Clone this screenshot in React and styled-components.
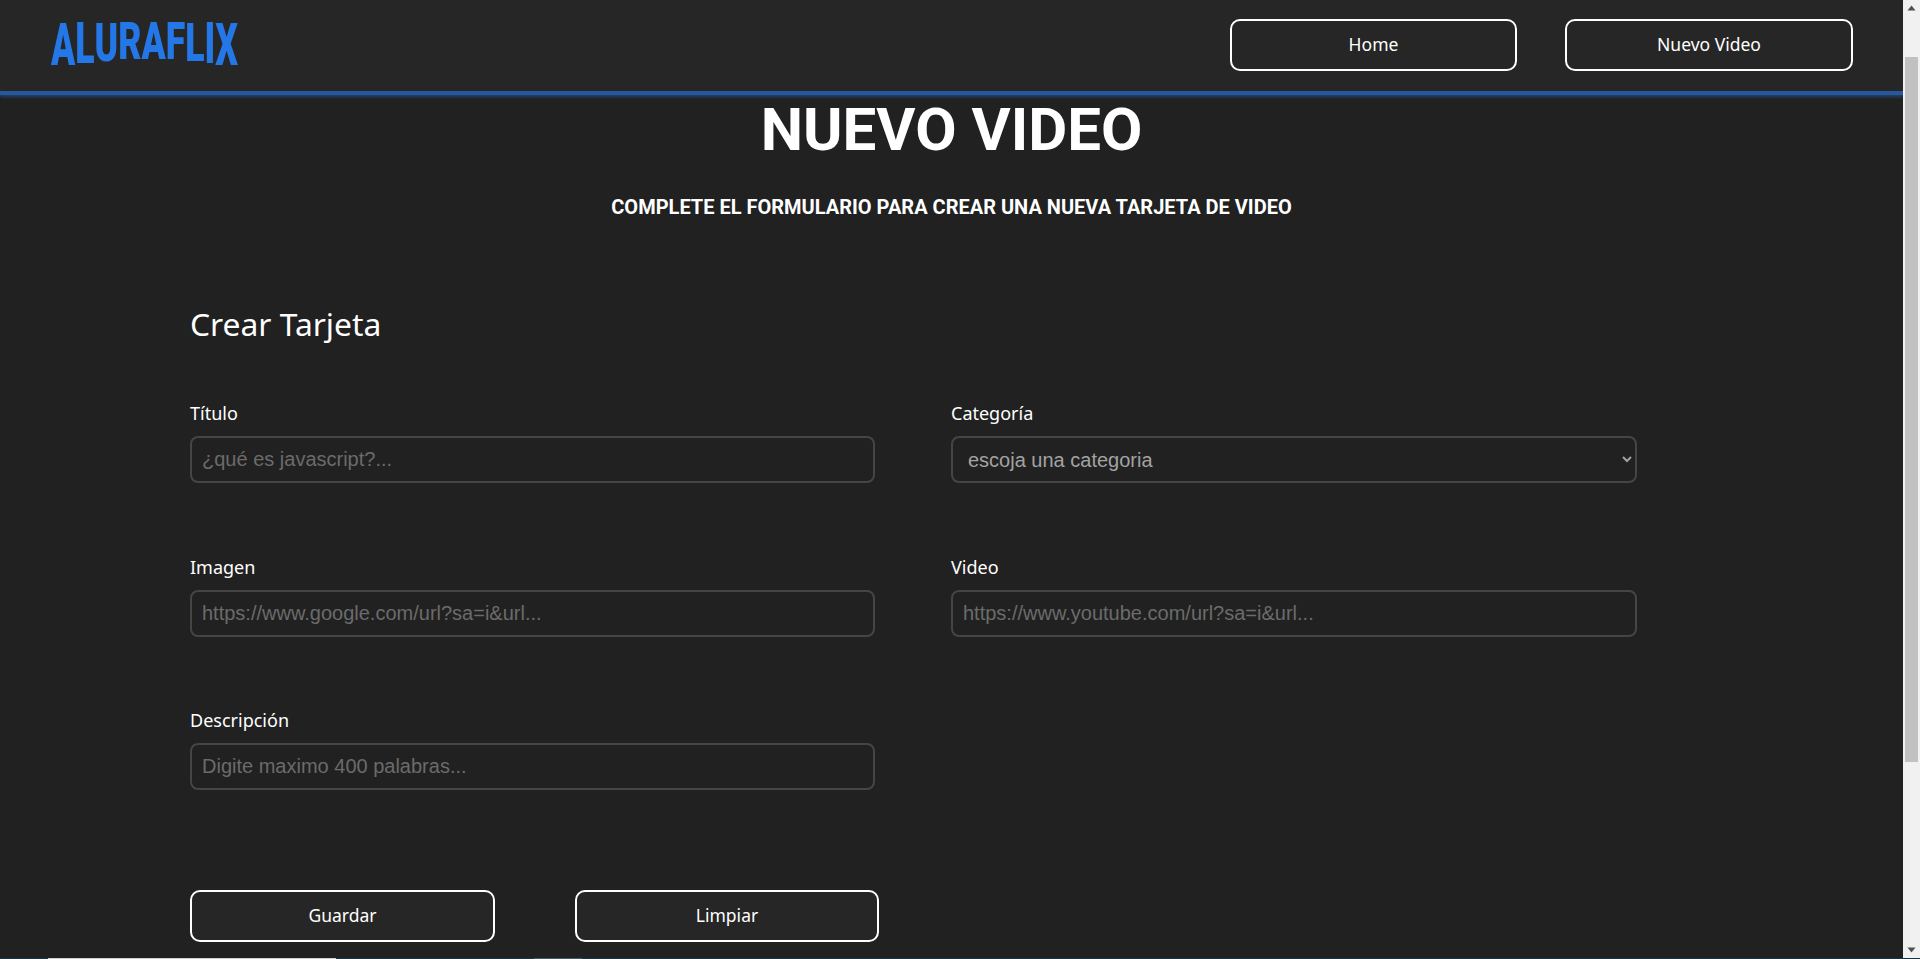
import React, { useLayoutEffect, useRef } from "react";
import styled, { createGlobalStyle } from "styled-components";

const Global = createGlobalStyle`
  * { box-sizing: border-box; }
  html, body { margin: 0; height: 100%; overflow: hidden; background: #212121; }
  #root { height: 100%; }
`;

const Shell = styled.div`
  height: 100vh;
  display: flex;
  flex-direction: column;
`;

const Window = styled.div`
  flex: 1;
  min-height: 0;
  display: flex;
`;

const Viewport = styled.div`
  flex: 1;
  min-width: 0;
  overflow: hidden;
  background: #212121;
`;

const ScrollRail = styled.div`
  width: 17px;
  flex: none;
  display: flex;
  flex-direction: column;
  background: #f1f1f1;
`;

const ScrollArrow = styled.svg`
  display: block;
  width: 17px;
  height: 17px;
  flex: none;
  margin-top: ${(p) => (p.$end ? "auto" : "0")};
  fill: #505050;
`;

const ScrollThumb = styled.div`
  width: 13px;
  height: 705px;
  margin: 40px 0 0 2px;
  background: #c1c1c1;
`;

const TaskStrip = styled.div`
  height: 1px;
  flex: none;
  display: flex;
  background: #1b3540;
`;

const StripSegment = styled.span`
  display: block;
  margin-left: ${(p) => p.$offset}px;
  width: ${(p) => p.$width}px;
  background: ${(p) => p.$color};
`;

const Header = styled.header`
  position: sticky;
  top: 0;
  z-index: 2;
  height: 95px;
  display: flex;
  align-items: flex-start;
  justify-content: space-between;
  padding: 19px 50px 0 51px;
  background: #262626;
  border-bottom: 4px solid #25599b;
  box-shadow: 0 2px 3px rgba(37, 89, 155, 0.6);
`;

const Logo = styled.div`
  display: inline-flex;
  margin-top: 4px;
  font: 900 57px/41px Roboto, "Liberation Sans", sans-serif;
  color: #2477e6;
  transform: scaleX(0.625);
  transform-origin: left top;
`;

const LogoLetter = styled.span`
  display: inline-block;
  transform-origin: center top;
  transform: scaleY(${(p) => p.$stretch});
`;

const Nav = styled.nav`
  display: flex;
  gap: 48px;
`;

const OutlineButton = styled.button`
  width: ${(p) => p.$width}px;
  height: 52px;
  border: 2px solid #fff;
  border-radius: 10px;
  background: #262626;
  color: #fff;
  font: 400 17.5px "Noto Sans", sans-serif;
  padding: 0 0 2px;
`;

const Main = styled.main`
  padding: 54px 0 260px;
`;

const Title = styled.h1`
  margin: 0;
  text-align: center;
  font: 700 60px/70px Roboto, sans-serif;
  color: #fff;
`;

const Subtitle = styled.p`
  margin: 30px 0 0;
  text-align: center;
  font: 700 20px/24px Roboto, sans-serif;
  color: #fff;
`;

const Form = styled.form`
  margin-top: 85px;
  padding: 0 0 0 190px;
`;

const FormTitle = styled.h2`
  margin: 0;
  font: 400 31.8px/40px "Noto Sans", sans-serif;
  color: #fff;
`;

const FieldGrid = styled.div`
  margin-top: 57px;
  display: grid;
  grid-template-columns: 685px 686px;
  column-gap: 76px;
  row-gap: 71.5px;
`;

const Field = styled.label`
  display: flex;
  flex-direction: column;
  gap: 11px;
  font: 400 18px/24px "Noto Sans", sans-serif;
  color: #fff;
`;

const TextInput = styled.input`
  height: 47px;
  padding: 0 10px;
  background: #212121;
  border: 2px solid #454545;
  border-radius: 8px;
  color: #fff;
  font: 400 20px "Liberation Sans", Arial, sans-serif;
  outline: none;
  &::placeholder { color: #6b6b6b; opacity: 1; }
`;

const SelectInput = styled.select`
  height: 47px;
  padding: 0 11px;
  background: #212121;
  border: 2px solid #454545;
  border-radius: 8px;
  color: #a3a3a3;
  font: 400 20px "Liberation Sans", Arial, sans-serif;
  outline: none;
`;

const Actions = styled.div`
  margin-top: 100px;
  display: flex;
  gap: 80px;
`;

export default function App() {
  const scroller = useRef(null);
  useLayoutEffect(() => {
    scroller.current.scrollTop = 54;
  }, []);
  const letters = [
    ["A", 1.05], ["L", 1], ["U", 0.95], ["R", 0.9], ["A", 0.9],
    ["F", 0.9], ["L", 0.95], ["I", 1], ["X", 1.05],
  ];
  return (
    <Shell>
      <Global />
      <Window>
        <Viewport ref={scroller}>
          <Header>
            <Logo>
              {letters.map(([c, s], i) => (
                <LogoLetter key={i} $stretch={s}>{c}</LogoLetter>
              ))}
            </Logo>
            <Nav>
              <OutlineButton type="button" $width={287}>Home</OutlineButton>
              <OutlineButton type="button" $width={288}>Nuevo Video</OutlineButton>
            </Nav>
          </Header>
          <Main>
            <Title>NUEVO VIDEO</Title>
            <Subtitle>COMPLETE EL FORMULARIO PARA CREAR UNA NUEVA TARJETA DE VIDEO</Subtitle>
            <Form>
              <FormTitle>Crear Tarjeta</FormTitle>
              <FieldGrid>
                <Field>Título<TextInput placeholder="¿qué es javascript?..." /></Field>
                <Field>Categoría
                  <SelectInput defaultValue="">
                    <option value="">escoja una categoria</option>
                  </SelectInput>
                </Field>
                <Field>Imagen<TextInput placeholder="https://www.google.com/url?sa=i&url..." /></Field>
                <Field>Video<TextInput placeholder="https://www.youtube.com/url?sa=i&url..." /></Field>
                <Field>Descripción<TextInput placeholder="Digite maximo 400 palabras..." /></Field>
              </FieldGrid>
              <Actions>
                <OutlineButton type="button" $width={305}>Guardar</OutlineButton>
                <OutlineButton type="button" $width={304}>Limpiar</OutlineButton>
              </Actions>
            </Form>
          </Main>
        </Viewport>
        <ScrollRail>
          <ScrollArrow viewBox="0 0 17 17"><path d="M8.5 5.5L12.5 10.5H4.5Z" /></ScrollArrow>
          <ScrollThumb />
          <ScrollArrow viewBox="0 0 17 17" $end><path d="M8.5 11.5L12.5 6.5H4.5Z" /></ScrollArrow>
        </ScrollRail>
      </Window>
      <TaskStrip>
        <StripSegment $offset={48} $width={288} $color="#d0d0d0" />
        <StripSegment $offset={198} $width={48} $color="#4a5a62" />
      </TaskStrip>
    </Shell>
  );
}
